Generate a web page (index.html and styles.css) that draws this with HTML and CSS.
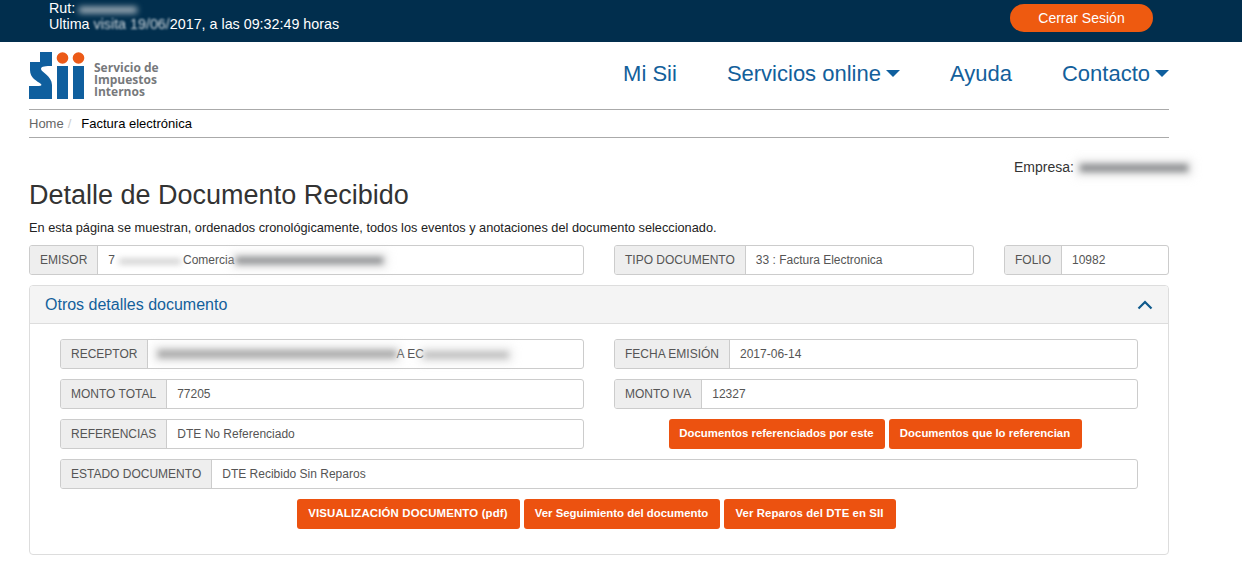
FILE: index.html
```html
<!DOCTYPE HTML>
<html>
<head>
    <meta name="viewport" content="width=device-width">
    <title>Detalle de Documento Recibido</title>
    <link rel="stylesheet" href="styles.css">
</head>
<body>
<div class="topbar">
    <div class="session">
        <div>Rut: <span class="smudge smudge-rut"></span></div>
        <div>Ultima <span class="soft">visita 19/06/</span>2017, a las 09:32:49 horas</div>
    </div>
    <a class="logout" href="#">Cerrar Sesión</a>
</div>

<div class="wrap">
    <header class="mainhead">
        <svg class="logo" width="132" height="50" viewBox="0 0 132 50">
            <path fill="#0f5f9e" d="M11 0H23V14C17 14 12 14 12 17 12 20 23 24 23 33V47H0V34H10C12 34 13 33 12 32 8 29 1 26 1 18V10H11Z"/>
            <rect x="28" y="14" width="11" height="33" fill="#0f5f9e"/>
            <rect x="44" y="14" width="11" height="33" fill="#0f5f9e"/>
            <circle cx="33.500" cy="6" r="5.800" fill="#ec5a17"/>
            <circle cx="49.500" cy="6" r="5.800" fill="#ec5a17"/>
            <text class="logo-text" x="65" y="20">Servicio de</text>
            <text class="logo-text" x="65" y="32">Impuestos</text>
            <text class="logo-text" x="65" y="44">Internos</text>
        </svg>
        <nav class="mainnav">
            <a href="#">Mi Sii</a>
            <a href="#">Servicios online<span class="caret"></span></a>
            <a href="#">Ayuda</a>
            <a href="#">Contacto<span class="caret"></span></a>
        </nav>
    </header>

    <div class="breadcrumb">
        <a href="#">Home</a><span class="sep">/</span><span class="current">Factura electrónica</span>
    </div>

    <div class="company">Empresa:<span class="smudge smudge-company"></span></div>

    <h1>Detalle de Documento Recibido</h1>
    <p class="intro">En esta página se muestran, ordenados cronológicamente, todos los eventos y anotaciones del documento seleccionado.</p>

    <div class="row-top">
        <div class="field span-6">
            <span class="addon">EMISOR</span>
            <span class="value">7<span class="smudge smudge-a"></span>Comercia<span class="smudge smudge-b"></span></span>
        </div>
        <div class="field span-4">
            <span class="addon">TIPO DOCUMENTO</span>
            <span class="value">33 : Factura Electronica</span>
        </div>
        <div class="field span-2">
            <span class="addon">FOLIO</span>
            <span class="value">10982</span>
        </div>
    </div>

    <section class="panel">
        <div class="panel-head">
            <span>Otros detalles documento</span>
            <svg class="chevron" width="16" height="10" viewBox="0 0 16 10"><path d="M1.500 8.500 8 2l6.500 6.500" fill="none" stroke="#0f5a8c" stroke-width="2.200"/></svg>
        </div>
        <div class="panel-body">
            <div class="field">
                <span class="addon">RECEPTOR</span>
                <span class="value"><span class="smudge smudge-c"></span>A EC<span class="smudge smudge-d"></span></span>
            </div>
            <div class="field">
                <span class="addon">FECHA EMISIÓN</span>
                <span class="value">2017-06-14</span>
            </div>
            <div class="field">
                <span class="addon">MONTO TOTAL</span>
                <span class="value">77205</span>
            </div>
            <div class="field">
                <span class="addon">MONTO IVA</span>
                <span class="value">12327</span>
            </div>
            <div class="field">
                <span class="addon">REFERENCIAS</span>
                <span class="value">DTE No Referenciado</span>
            </div>
            <div class="btn-row btn-row-refs">
                <a class="btn btn-refs" href="#">Documentos referenciados por este</a>
                <a class="btn btn-refd" href="#">Documentos que lo referencian</a>
            </div>
            <div class="field wide">
                <span class="addon">ESTADO DOCUMENTO</span>
                <span class="value">DTE Recibido Sin Reparos</span>
            </div>
            <div class="btn-row btn-row-doc wide">
                <a class="btn btn-pdf" href="#">VISUALIZACIÓN DOCUMENTO (pdf)</a>
                <a class="btn btn-track" href="#">Ver Seguimiento del documento</a>
                <a class="btn btn-repairs" href="#">Ver Reparos del DTE en SII</a>
            </div>
        </div>
    </section>
</div>
</body>
</html>
```

FILE: styles.css
```css
body {
  font-family: "Liberation Sans", Arial, sans-serif;
  margin: 0;
  padding: 0;
  background-color: #fff;
  color: #333;
  overflow: hidden;
}
a {
  text-decoration: none;
}
.topbar {
  background-color: #012e4d;
  color: #fff;
  height: 42px;
  box-sizing: border-box;
  padding: 0 89px 0 49px;
  display: flex;
  justify-content: space-between;
  font-size: 14.300px;
  line-height: 16px;
}
.logout {
  background-color: #ee5a10;
  color: #fff;
  width: 143px;
  height: 28px;
  margin-top: 4px;
  border-radius: 14px;
  text-align: center;
  line-height: 28px;
  font-size: 14px;
}
.wrap {
  width: 1140px;
  margin-left: 29px;
}
.mainhead {
  display: flex;
  justify-content: space-between;
  height: 67px;
  border-bottom: 1px solid #aaa;
}
.logo {
  margin-top: 10px;
}
.logo-text {
  font-family: "Open Sans", sans-serif;
  font-size: 12px;
  font-weight: 700;
  fill: #77797c;
}
.mainnav {
  display: flex;
  gap: 50px;
  padding-top: 19px;
}
.mainnav a {
  color: #13609b;
  font-size: 22px;
  line-height: 26px;
}
.caret {
  display: inline-block;
  margin-left: 5px;
  vertical-align: 4px;
  border-top: 7px solid #0f5f9e;
  border-left: 7px solid transparent;
  border-right: 7px solid transparent;
}
.breadcrumb {
  height: 27px;
  line-height: 28px;
  border-bottom: 1px solid #aaa;
  font-size: 13px;
  color: #000;
}
.breadcrumb a {
  color: #666;
}
.sep {
  color: #ccc;
  margin: 0 10px 0 4px;
}
.company {
  margin: 21px 0 0 985px;
  width: 190px;
  font-size: 14px;
  line-height: 17px;
  white-space: nowrap;
}
h1 {
  font-size: 27px;
  font-weight: 400;
  line-height: 32px;
  margin: 3px 0 0;
}
.intro {
  font-size: 12.750px;
  line-height: 14px;
  margin: 10px 0 10px;
  color: #222;
}
.row-top {
  display: grid;
  grid-template-columns: repeat(12, 1fr);
  column-gap: 30px;
}
.span-6 {
  grid-column: span 6;
}
.span-4 {
  grid-column: span 4;
}
.span-2 {
  grid-column: span 2;
}
.field {
  display: flex;
  height: 30px;
  box-sizing: border-box;
  border: 1px solid #ccc;
  border-radius: 3px;
  font-size: 12px;
  line-height: 28px;
  color: #555;
  background-color: #fff;
}
.addon {
  background-color: #eee;
  border-right: 1px solid #ccc;
  border-radius: 2px 0 0 2px;
  padding: 0 10px;
  white-space: nowrap;
}
.value {
  padding: 0 10px;
  white-space: nowrap;
}
.panel {
  margin-top: 10px;
  height: 270px;
  box-sizing: border-box;
  border: 1px solid #ddd;
  border-radius: 4px;
}
.panel-head {
  height: 38px;
  box-sizing: border-box;
  background-color: #f4f4f4;
  border-bottom: 1px solid #ddd;
  border-radius: 3px 3px 0 0;
  padding: 0 15px;
  display: flex;
  justify-content: space-between;
  align-items: center;
  font-size: 16px;
  color: #13609b;
}
.panel-body {
  display: grid;
  grid-template-columns: 524px 524px;
  column-gap: 30px;
  row-gap: 10px;
  padding: 15px 30px 0;
}
.wide {
  grid-column: 1 / 3;
}
.btn-row {
  display: flex;
  justify-content: center;
  gap: 4px;
}
.btn-row-refs {
  padding-right: 2px;
}
.btn-row-doc {
  padding-right: 6px;
}
.btn {
  background-color: #ec5210;
  color: #fff;
  font-size: 11.400px;
  font-weight: 700;
  height: 30px;
  line-height: 29px;
  text-align: center;
  border-radius: 3px;
  white-space: nowrap;
}
.btn-refs {
  width: 216px;
}
.btn-refd {
  width: 193px;
}
.btn-pdf {
  width: 223px;
  letter-spacing: 0.170px;
}
.btn-track {
  width: 196px;
}
.btn-repairs {
  width: 172px;
  letter-spacing: 0.100px;
}
/* blurred out data from the capture */
.soft {
  filter: blur(1.200px);
  opacity: 0.8;
}
.smudge {
  display: inline-block;
  height: 7px;
  background-color: #8d8f91;
  filter: blur(3px);
  vertical-align: 0;
  box-shadow: 0 0 6px 4px rgba(205, 205, 205, 0.5);
}
.smudge-rut {
  width: 58px;
  height: 6px;
  background-color: #b5bfc6;
  box-shadow: none;
}
.smudge-company {
  width: 108px;
  margin-left: 6px;
  height: 8px;
}
.smudge-a {
  width: 62px;
  height: 5px;
  background-color: #c8c8c8;
  margin: 0 2px 0 4px;
  box-shadow: none;
}
.smudge-b {
  width: 147px;
  height: 7px;
  margin-left: 2px;
}
.smudge-c {
  width: 238px;
  height: 8px;
  background-color: #aaa;
}
.smudge-d {
  width: 84px;
  height: 6px;
  background-color: #bbb;
}
```
